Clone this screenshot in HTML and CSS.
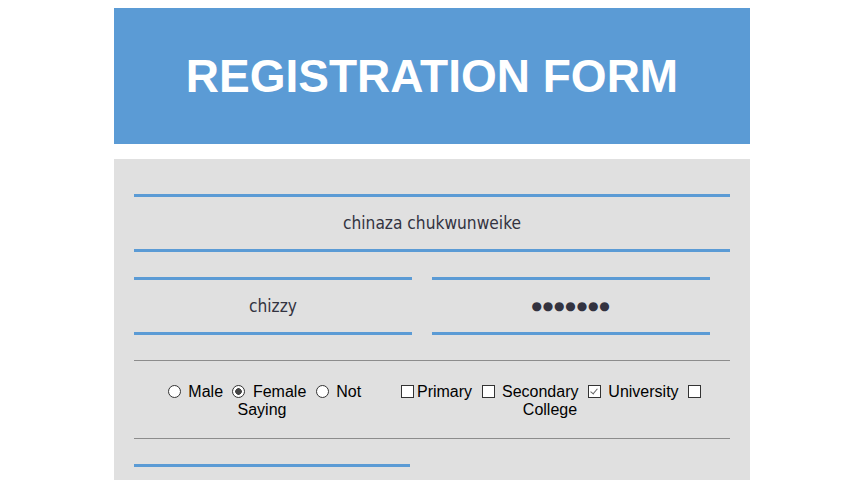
FILE: index.html
```html
<!DOCTYPE html>
<html lang="en">
<head>
<meta charset="utf-8">
<title>Registration Form</title>
<link rel="stylesheet" href="styles.css">
</head>
<body>
<div class="container">
  <header class="banner">
    <h1 class="title">REGISTRATION FORM</h1>
  </header>
  <form class="form">
    <input class="field field-full" type="text" value="chinaza chukwunweike">
    <div class="row">
      <input class="field field-half" type="text" value="chizzy">
      <input class="field field-half pass" type="text" value="●●●●●●●">
    </div>
    <hr class="rule">
    <div class="choices">
      <div class="group group-gender">
        <input type="radio" name="g"> Male <input type="radio" name="g" checked> Female <input type="radio" name="g"> Not Saying
      </div>
      <div class="group group-edu">
        <input type="checkbox">Primary <input type="checkbox"> Secondary <input type="checkbox" checked> University <input type="checkbox"> College
      </div>
    </div>
    <hr class="rule">
    <div class="row">
      <input class="field field-last" type="text" value="">
    </div>
  </form>
</div>
</body>
</html>
```
FILE: styles.css
```css
body {
  margin: 8px;
  background: #ffffff;
  font-family: "Liberation Sans", Arial, sans-serif;
}
.container {
  width: 636px;
  margin: 0 auto;
}
.banner {
  height: 136px;
  background: #5b9bd5;
  display: flex;
  align-items: center;
  justify-content: center;
}
.title {
  margin: 0;
  color: #ffffff;
  font-size: 46px;
  font-weight: bold;
  font-family: "Liberation Sans", Arial, sans-serif;
}
.form {
  margin-top: 15px;
  background: #e0e0e0;
  padding: 35px 20px 40px;
}
.field {
  display: block;
  box-sizing: border-box;
  height: 58px;
  margin: 0;
  padding: 0;
  border: none;
  border-top: 3px solid #5b9bd5;
  border-bottom: 3px solid #5b9bd5;
  background: transparent;
  text-align: center;
  font-family: "DejaVu Sans Condensed", "DejaVu Sans", sans-serif;
  font-size: 17.2px;
  color: #333340;
  outline: none;
}
.field-full {
  width: 596px;
  margin-bottom: 25px;
}
.row {
  display: flex;
  gap: 20px;
}
.field-half {
  width: 278px;
}
.pass {
  font-family: "DejaVu Sans", sans-serif;
  font-size: 12px;
  letter-spacing: 0.8px;
}
.field-last {
  width: 276px;
}
.rule {
  margin: 25px 0 0;
  border: none;
  border-top: 1px solid #8c8c8c;
  height: 0;
}
.choices {
  display: flex;
  gap: 13px;
  padding: 21px 0 19px 13px;
  font-size: 16px;
  line-height: 18px;
  color: #000;
}
.group {
  text-align: center;
}
.group-gender {
  width: 230px;
}
.group-edu {
  width: 320px;
}
.choices + .rule {
  margin-top: 0;
  margin-bottom: 25px;
}
input[type="radio"], input[type="checkbox"] {
  appearance: none;
  -webkit-appearance: none;
  width: 13px;
  height: 13px;
  box-sizing: border-box;
  border: 1px solid #333;
  background: #fff;
  margin: 3px 3px 0 5px;
  vertical-align: -1px;
  position: relative;
}
input[type="radio"] {
  border-radius: 50%;
}
input[type="radio"]:checked {
  background: radial-gradient(circle, #444 0, #444 3px, #fff 3.6px);
}
input[type="checkbox"]:checked::after {
  content: "";
  position: absolute;
  left: 3px;
  top: 1px;
  width: 3px;
  height: 6px;
  border-right: 1.5px solid #666;
  border-bottom: 1.5px solid #666;
  transform: rotate(40deg);
}
```
